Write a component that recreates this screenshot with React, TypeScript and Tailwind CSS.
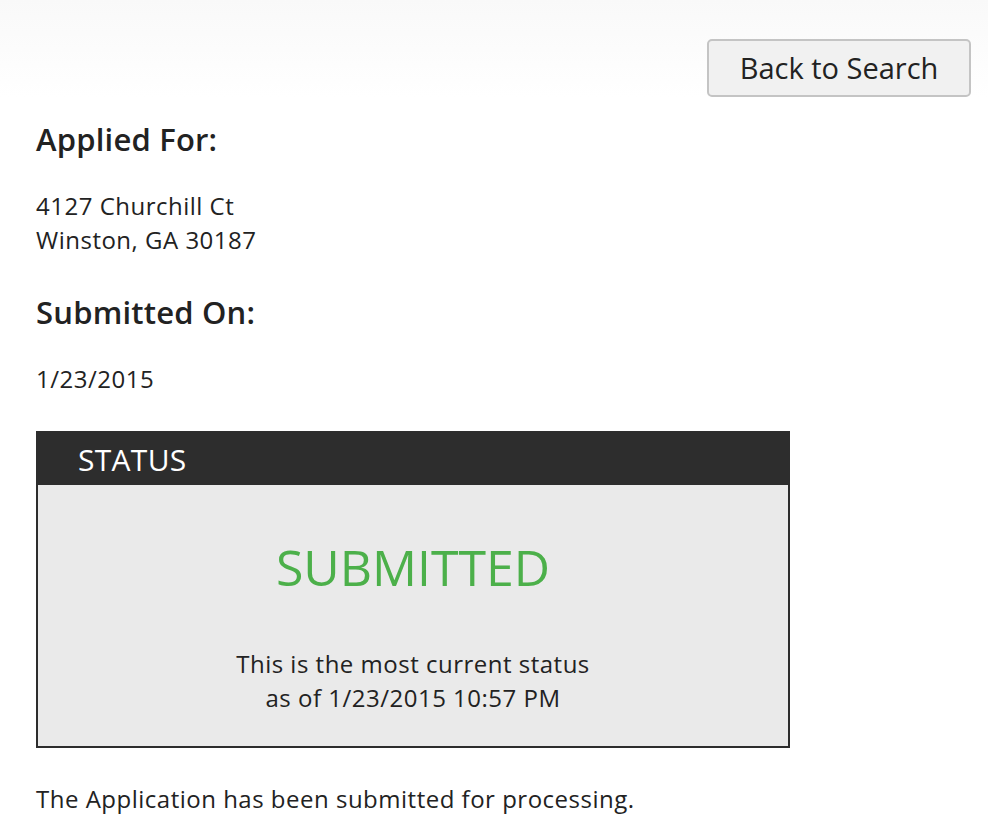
export default function App() {
  return (
    <div className="min-h-[832px] w-full bg-white font-['Open_Sans','Liberation_Sans',sans-serif] text-[#222]">
      <div className="bg-gradient-to-b from-[#f9f9f9] to-white pr-[17px] pt-[39px]">
        <div className="flex justify-end">
          <button className="h-[58px] w-[264px] rounded-[5px] border-2 border-[#c4c4c4] bg-[#f1f1f1] text-[29px] text-[#222]">
            Back to Search
          </button>
        </div>
      </div>
      <div className="px-9">
        <h2 className="mt-[25px] text-[31px] font-semibold leading-[34px] tracking-[0.2px]">Applied For:</h2>
        <p className="mt-[33px] text-[24px] leading-[34px] tracking-[0.5px]">
          4127 Churchill Ct
          <br />
          Winston, GA 30187
        </p>
        <h2 className="mt-[38px] text-[31px] font-semibold leading-[34px] tracking-[0.2px]">Submitted On:</h2>
        <p className="mt-[33px] text-[24px] leading-[34px] tracking-[0.5px]">1/23/2015</p>

        <div className="mt-[35px] w-[754px] border-2 border-[#2d2d2d]">
          <div className="h-[52px] bg-[#2d2d2d] pl-[40px] text-[30px] leading-[54px] tracking-[0.3px] text-white">STATUS</div>
          <div className="flex h-[261px] flex-col items-center bg-[#eaeaea]">
            <div className="mt-[50px] text-[50px] leading-[64px] text-[#4cb04a]">SUBMITTED</div>
            <p className="mt-[48px] text-center text-[24px] leading-[34px] tracking-[0.5px]">
              This is the most current status
              <br />
              as of 1/23/2015 10:57 PM
            </p>
          </div>
        </div>

        <p className="mt-[34px] text-[24px] leading-[34px] tracking-[0.5px]">
          The Application has been submitted for processing.
        </p>
      </div>
    </div>
  );
}
